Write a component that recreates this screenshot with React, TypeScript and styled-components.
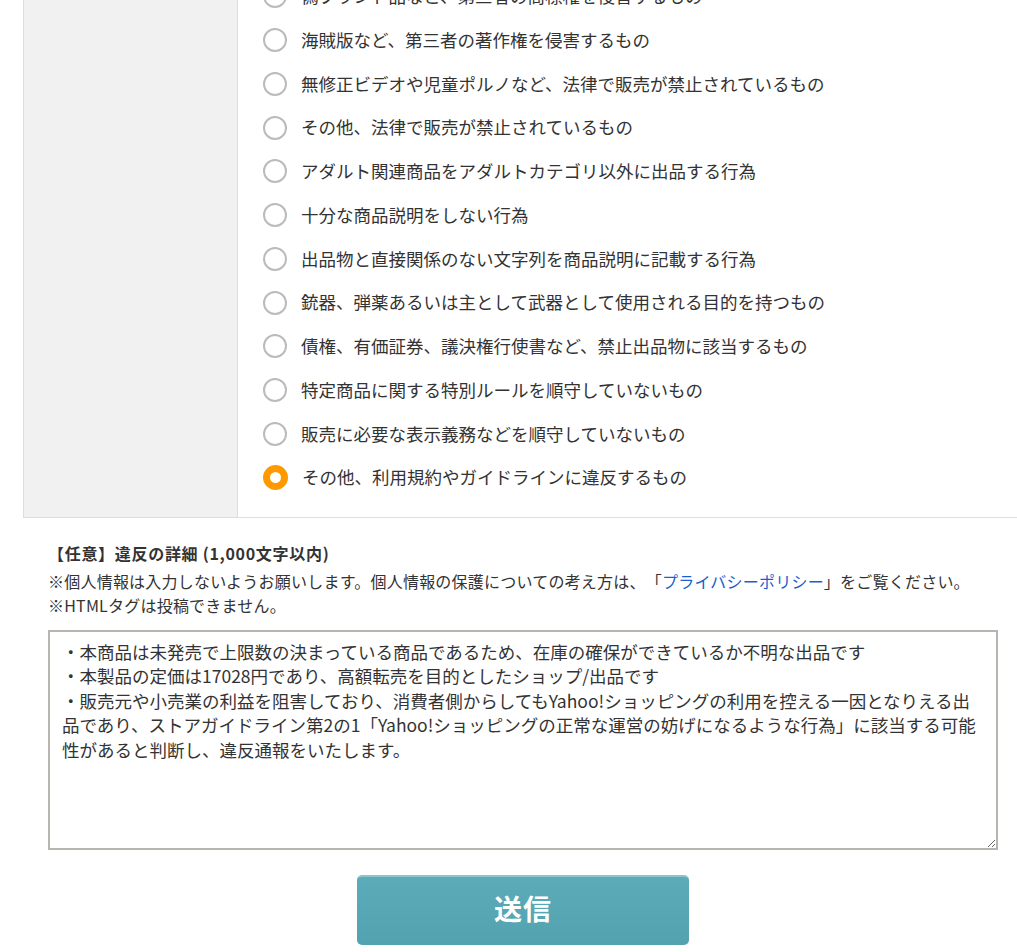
import React from "react";
import styled, { createGlobalStyle } from "styled-components";

const GlobalStyle = createGlobalStyle`
  html, body {
    margin: 0;
    padding: 0;
    background: #ffffff;
  }
  body {
    font-family: "Noto Sans CJK JP", "Noto Sans", sans-serif;
    color: #333333;
    overflow: hidden;
    text-spacing-trim: space-all;
  }
  textarea, button {
    text-spacing-trim: space-all;
  }
`;

const Page = styled.div`
  padding-left: 23px;
  padding-bottom: 40px;
`;

const Table = styled.div`
  display: flex;
  margin-top: -34.375px;
  border-bottom: 1px solid #dddddd;
`;

const LabelCell = styled.div`
  flex: 0 0 215px;
  box-sizing: border-box;
  background: #f1f1f1;
  border-left: 1px solid #dddddd;
  border-right: 1px solid #dddddd;
`;

const OptionsCell = styled.div`
  flex: 1;
  padding: 17.5px 0 26px 25px;
  display: flex;
  flex-direction: column;
  gap: 17.5px;
`;

const OptionRow = styled.label`
  display: flex;
  align-items: center;
  gap: 14px;
  height: 26.25px;
  font-size: 17.5px;
  line-height: 26.25px;
  color: #333333;
  white-space: nowrap;
`;

const RadioInput = styled.input`
  appearance: none;
  -webkit-appearance: none;
  box-sizing: border-box;
  width: 24px;
  height: 24px;
  margin: 0;
  flex: 0 0 24px;
  border-radius: 50%;
  border: 2px solid #bbbbbb;
  background: #ffffff;

  &:checked {
    width: 25px;
    height: 25px;
    flex-basis: 25px;
    border: 7.5px solid #ff9900;
  }
`;

const DetailSection = styled.div`
  width: 950px;
  padding: 23px 0 0 25px;
`;

const Heading = styled.div`
  font-size: 16px;
  line-height: 24px;
  font-weight: bold;
  letter-spacing: 0.7px;
  color: #333333;
  margin-bottom: 4px;
`;

const Note = styled.div`
  font-size: 16px;
  line-height: 24px;
  letter-spacing: 0.22px;
  color: #333333;
  white-space: nowrap;
`;

const Link = styled.a`
  color: #1a5fd0;
  text-decoration: none;
`;

const DetailArea = styled.textarea`
  display: block;
  box-sizing: border-box;
  width: 950px;
  height: 220px;
  margin-top: 13px;
  padding: 8px 12px;
  border: 2px solid #b8b4b0;
  border-radius: 0;
  font-family: "Noto Sans CJK JP", "Noto Sans", sans-serif;
  font-size: 17.5px;
  line-height: 24.5px;
  color: #333333;
  background: #ffffff;
  outline: none;
  overflow: hidden;
`;

const SubmitButton = styled.button`
  display: block;
  width: 332px;
  height: 70px;
  margin: 25px auto 0;
  padding: 0 0 6px;
  border: none;
  border-top: 2px solid #8fc3cb;
  border-radius: 5px;
  background: linear-gradient(#5cabb8, #52a2b0);
  color: #ffffff;
  font-family: "Noto Sans CJK JP", "Noto Sans", sans-serif;
  font-size: 28px;
  line-height: 1;
  font-weight: bold;
  letter-spacing: 1px;
  cursor: pointer;
`;

const options = [
  "偽ブランド品など、第三者の商標権を侵害するもの",
  "海賊版など、第三者の著作権を侵害するもの",
  "無修正ビデオや児童ポルノなど、法律で販売が禁止されているもの",
  "その他、法律で販売が禁止されているもの",
  "アダルト関連商品をアダルトカテゴリ以外に出品する行為",
  "十分な商品説明をしない行為",
  "出品物と直接関係のない文字列を商品説明に記載する行為",
  "銃器、弾薬あるいは主として武器として使用される目的を持つもの",
  "債権、有価証券、議決権行使書など、禁止出品物に該当するもの",
  "特定商品に関する特別ルールを順守していないもの",
  "販売に必要な表示義務などを順守していないもの",
  "その他、利用規約やガイドラインに違反するもの",
];

const detailText =
  "・本商品は未発売で上限数の決まっている商品であるため、在庫の確保ができているか不明な出品です\n" +
  "・本製品の定価は17028円であり、高額転売を目的としたショップ/出品です\n" +
  "・販売元や小売業の利益を阻害しており、消費者側からしてもYahoo!ショッピングの利用を控える一因となりえる出品であり、ストアガイドライン第2の1「Yahoo!ショッピングの正常な運営の妨げになるような行為」に該当する可能性があると判断し、違反通報をいたします。";

export default function App() {
  return (
    <>
      <GlobalStyle />
      <Page>
        <Table>
          <LabelCell />
          <OptionsCell>
            {options.map((text, i) => (
              <OptionRow key={i}>
                <RadioInput
                  type="radio"
                  name="reason"
                  defaultChecked={i === options.length - 1}
                />
                {text}
              </OptionRow>
            ))}
          </OptionsCell>
        </Table>
        <DetailSection>
          <Heading>【任意】違反の詳細 (1,000文字以内)</Heading>
          <Note>
            ※個人情報は入力しないようお願いします。個人情報の保護についての考え方は、「
            <Link href="#">プライバシーポリシー</Link>」をご覧ください。
          </Note>
          <Note>※HTMLタグは投稿できません。</Note>
          <DetailArea defaultValue={detailText} />
          <SubmitButton type="button">送信</SubmitButton>
        </DetailSection>
      </Page>
    </>
  );
}
